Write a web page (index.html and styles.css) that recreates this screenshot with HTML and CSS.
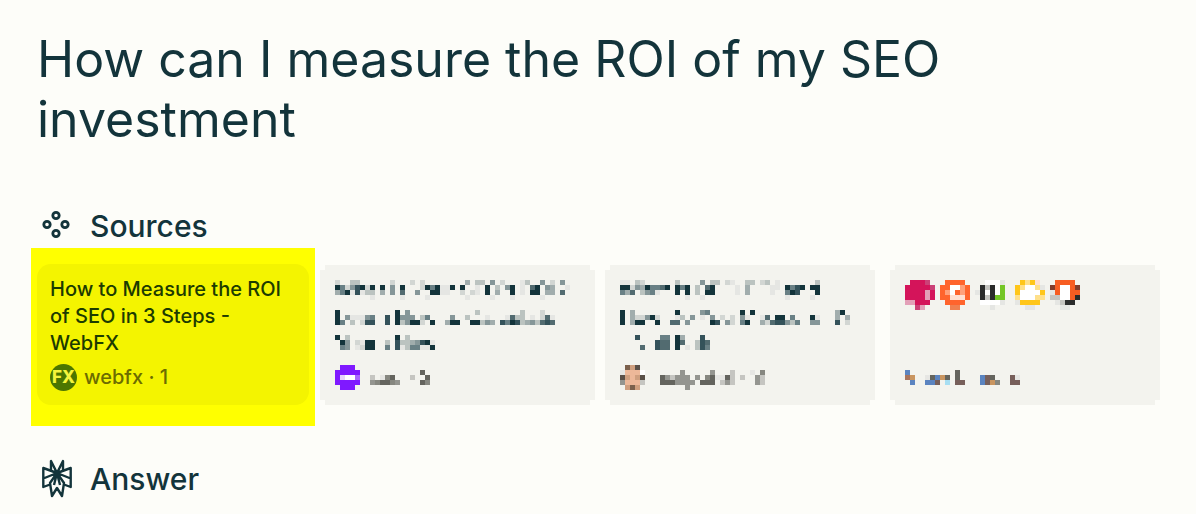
FILE: index.html
```html
<!DOCTYPE html>
<html lang="en">
<head>
<meta charset="utf-8">
<title>How can I measure the ROI of my SEO investment</title>
<link rel="stylesheet" href="styles.css">
</head>
<body>
<main class="page">
  <h1 class="question">How can I measure the ROI of my SEO investment</h1>

  <section class="sources">
    <h2 class="section-title">
      <svg class="section-icon" viewBox="0 0 36 40" fill="none" stroke="currentColor" stroke-width="2.8" aria-hidden="true">
        <circle cx="18" cy="9.500" r="3.200"/>
        <circle cx="9" cy="18.500" r="3.200"/>
        <circle cx="27" cy="18.500" r="3.200"/>
        <circle cx="18" cy="27.500" r="3.200"/>
      </svg>
      Sources
    </h2>
    <div class="cards">
      <div class="highlight">
        <article class="card">
          <h3 class="card-title">How to Measure the ROI of SEO in 3 Steps - WebFX</h3>
          <p class="byline"><span class="favicon">FX</span>webfx · 1</p>
        </article>
      </div>
      <article class="masked masked-wide"><svg class="mosaic" data-map="second" aria-hidden="true"></svg></article>
      <article class="masked"><svg class="mosaic" data-map="third" aria-hidden="true"></svg></article>
      <article class="masked"><svg class="mosaic" data-map="more" aria-hidden="true"></svg></article>
    </div>
  </section>

  <h2 class="section-title answer">
    <svg class="section-icon" viewBox="0 0 36 40" fill="none" stroke="currentColor" stroke-width="2.4" stroke-linejoin="round" aria-hidden="true">
      <path d="M19 14 13 2v9.500M19 14l6-12v9.500M19 14 5.300 9v19l6.700-2.500M19 14l13.700-5v19L26 25.500M19 14 5.300 19.500M19 14l13.700 5.500M19 14l-7 10 2 13 5-8 5 8 2-13L19 14M19 14l-3 12M19 14l3 12"/>
    </svg>
    Answer
  </h2>
</main>
<script src="mosaic.js"></script>
</body>
</html>
```

FILE: styles.css
```css
* {
  box-sizing: border-box;
}

body {
  margin: 0;
  background: #fdfdf9;
  color: #13343b;
  font-family: Inter, "Liberation Sans", sans-serif;
}

.page {
  padding: 29px 36px 16px 35px;
}

h1, h2, h3, p {
  margin: 0;
}

.question {
  padding-left: 2px;
  font-size: 50px;
  line-height: 60px;
  font-weight: 400;
}

.sources {
  margin-top: 57px;
}

.section-title {
  display: flex;
  align-items: center;
  gap: 16px;
  padding-left: 3px;
  font-size: 30px;
  line-height: 40px;
  font-weight: 500;
}

.section-icon {
  width: 36px;
  height: 40px;
}

.cards {
  display: grid;
  grid-template-columns: repeat(4, minmax(0, 1fr));
  gap: 15px;
  margin-top: 19px;
}

.highlight {
  margin: -17px -10px -21px -4px;
  padding: 16px 6px 21px;
  background: #ffff00;
}

.card {
  height: 100%;
  padding: 12px 13px;
  border-radius: 14px;
  background: #f4f400;
}

.card-title {
  color: #1c3b00;
  font-size: 20px;
  line-height: 27px;
  font-weight: 500;
}

.byline {
  display: flex;
  align-items: center;
  gap: 7px;
  margin-top: 7px;
  color: #6c6c00;
  font-size: 20px;
  line-height: 27px;
  font-weight: 500;
}

.favicon {
  width: 27px;
  height: 27px;
  border-radius: 50%;
  background: #4b7600;
  color: #f4f43c;
  font-size: 17px;
  font-weight: 800;
  text-align: center;
}

.masked {
  padding: 15px;
  background: #f3f3ee;
  clip-path: polygon(5px 0, calc(100% - 5px) 0, calc(100% - 5px) 5px, 100% 5px, 100% calc(100% - 5px), calc(100% - 5px) calc(100% - 5px), calc(100% - 5px) 100%, 5px 100%, 5px calc(100% - 5px), 0 calc(100% - 5px), 0 5px, 5px 5px);
}

.masked-wide {
  margin-right: -5px;
}

.mosaic {
  display: block;
  shape-rendering: crispEdges;
}

.answer {
  margin-top: 54px;
}
```

FILE: mosaic.js
```js
// Each character is one 5px block; the palette gives its colour.
const BLOCK = 5;

const palette = {
  1: "#e5e6e3", 2: "#d2d6d3", 3: "#bbc3c0", 4: "#a1adad", 5: "#859698",
  6: "#698085", 7: "#526b70", 8: "#34525a", 9: "#13343b",
  w: "#ffffff", a: "#e6e6e3", b: "#c5c5c1", c: "#949590", d: "#868780", e: "#64645e",
  P: "#7f19ff", Q: "#a966ff", l: "#e6d5fb",
  S: "#edb899", B: "#7b604c", T: "#cf9f7f", D: "#5a5048",
  M: "#d4145a", N: "#e3a0b8", O: "#cb4177",
  H: "#ff642d", h: "#ffa07a", i: "#ffe0d2", j: "#f08050",
  K: "#2b2c2c", G: "#74c626", Y: "#ffc61a", y: "#ffe08a",
  R: "#f75d22", Z: "#803c2c",
  U: "#5b84c0", V: "#a9745c", W: "#c99560", X: "#775f5a", L: "#a7def2"
};

const maps = {
  second: [
    "2..33......2...2.2........4.33.5.2...13..5.2.5.",
    "96258929.9.5.9...2969119.9..1.9.3.59.1.79.54..1",
    "46918133.4.5.7..5..9911..2.21.9.4..9.1.99.44.7.",
    ".......1.....1....1.......1....1...1.....1",
    "", "",
    "9...........9.5.............3........3...2",
    "9.511156..8.9555.36....5..3...1...1733.1.271",
    "96.3.288..8.935992.9..499..99354.86983453787",
    "", "",
    "9.3.........9.3",
    ".95.2199..3.83345891",
    ".65.1299..6.81366119",
    "", "", "",
    ".PPP.",
    "PPPPP............e",
    "PlwwQ..b.ade...b..e",
    "PPPPP..cdeedc....ed",
    ".PPP."
  ],
  third: [
    "11.32......3....5.33.21..33.23.1.......3",
    "9925496679.969.3.79....1.4....11.9689.99",
    "647.3561...9.9.3.99....1.4....1..698...9",
    ".............1..1................1....1",
    "", "",
    "9.4........9....56......9.9................49",
    "9.422592...13.5.1.5.2.2.51..17.99.6...91...4.4",
    "9.499..9..77.5....98.52.69..42788536..55...8.2",
    "", "",
    "...8....66.94...8",
    ".......877.97..387",
    "....7..877.9.1.386",
    "", "", "",
    ".BTD.",
    "aSSSw.......c.....c...b...a.d",
    "DTSTD...ecbccc.c.deaaeb.b..cb",
    "cSSSb...eeecccc.eee.bcb....cb",
    ".TBT.........c"
  ],
  more: [
    ".MMMO...HHHH....www1...YyYi...RRRR",
    "MMMMMO.HHwwhH..KbKwG..Yywwy1.ZRwwRZ",
    "MMMMNM.HhwHhH.1KwKwG..YwwwwY.1RwwRR",
    "MMMMNM.HHiiiH..KbKGG..ywwwyy.bbwwRK",
    "NNMMM...HHHH...wwww1..1YYYY...1bKK",
    "..ON.....jj......1......11.....11",
    "", "", "", "", "", "", "", "", "", "", "", "",
    "U.........e",
    "VW..aeUWe.e....UXe...Xa",
    ".U..UUX.L.XX...UXWd..XX",
    ""
  ]
};

document.querySelectorAll(".mosaic").forEach((svg) => {
  const rows = maps[svg.dataset.map];
  const columns = Math.max(...rows.map((row) => row.length));
  svg.setAttribute("width", columns * BLOCK);
  svg.setAttribute("height", rows.length * BLOCK);
  rows.forEach((row, y) => {
    [...row].forEach((key, x) => {
      if (!palette[key]) return;
      const rect = document.createElementNS("http://www.w3.org/2000/svg", "rect");
      rect.setAttribute("x", x * BLOCK);
      rect.setAttribute("y", y * BLOCK);
      rect.setAttribute("width", BLOCK);
      rect.setAttribute("height", BLOCK);
      rect.setAttribute("fill", palette[key]);
      svg.append(rect);
    });
  });
});
```
